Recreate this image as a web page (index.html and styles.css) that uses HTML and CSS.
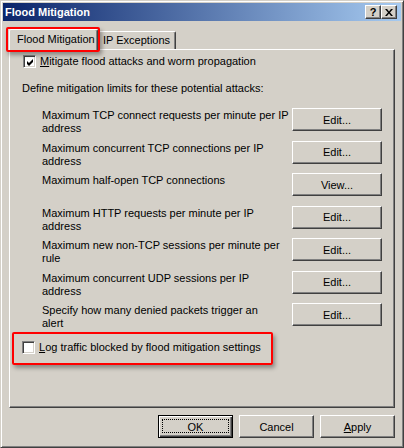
FILE: index.html
```html
<!DOCTYPE html>
<html lang="en">
<head>
    <meta charset="UTF-8">
    <title>Flood Mitigation</title>
    <link rel="stylesheet" href="styles.css">
</head>
<body>
    <div class="window">
        <!-- Заголовок окна -->
        <div class="caption">
            <span class="title">Flood Mitigation</span>
            <div class="cap-buttons">
                <div class="cap-btn help">?</div>
                <div class="cap-btn">
                    <svg width="8" height="7" viewBox="0 0 8 7"><path d="M0 0h2l2 2.5L6 0h2L5 3.5 8 7H6L4 4.5 2 7H0l3-3.5z" fill="#000"/></svg>
                </div>
            </div>
        </div>

        <div class="body">
            <!-- Вкладки -->
            <div class="tabs">
                <div class="tab active">Flood Mitigation</div>
                <div class="tab">IP Exceptions</div>
            </div>

            <div class="panel">
                <label class="check first">
                    <span class="box">
                        <svg width="9" height="9" viewBox="0 0 9 9"><path d="M1 3 3 5 7 1v3L3 8 1 6z" fill="#000"/></svg>
                    </span>
                    <span><u>M</u>itigate flood attacks and worm propagation</span>
                </label>

                <p class="intro">Define mitigation limits for these potential attacks:</p>

                <div class="limits">
                    <div class="limit">
                        <span class="label">Maximum TCP connect requests per minute per IP<br>address</span>
                        <button class="btn">Edit...</button>
                    </div>
                    <div class="limit">
                        <span class="label">Maximum concurrent TCP connections per IP<br>address</span>
                        <button class="btn">Edit...</button>
                    </div>
                    <div class="limit">
                        <span class="label">Maximum half-open TCP connections</span>
                        <button class="btn">View...</button>
                    </div>
                    <div class="limit">
                        <span class="label">Maximum HTTP requests per minute per IP<br>address</span>
                        <button class="btn">Edit...</button>
                    </div>
                    <div class="limit">
                        <span class="label">Maximum new non-TCP sessions per minute per<br>rule</span>
                        <button class="btn">Edit...</button>
                    </div>
                    <div class="limit">
                        <span class="label">Maximum concurrent UDP sessions per IP<br>address</span>
                        <button class="btn">Edit...</button>
                    </div>
                    <div class="limit">
                        <span class="label">Specify how many denied packets trigger an<br>alert</span>
                        <button class="btn">Edit...</button>
                    </div>
                </div>

                <label class="check log">
                    <span class="box"></span>
                    <span><u>L</u>og traffic blocked by flood mitigation settings</span>
                </label>
            </div>

            <!-- Кнопки диалога -->
            <div class="actions">
                <button class="btn wide default">OK</button>
                <button class="btn wide">Cancel</button>
                <button class="btn wide"><u>A</u>pply</button>
            </div>
        </div>

        <!-- Красные пометки поверх окна -->
        <div class="mark mark-tab"></div>
        <div class="mark mark-log"></div>
    </div>
</body>
</html>
```

FILE: styles.css
```css
/* Общие настройки */
body {
    margin: 0;
    font-family: "Liberation Sans", Arial, sans-serif;
    font-size: 11px;
    color: #000;
    background: #d4d0c8;
}

/* Рамка окна */
.window {
    position: relative;
    width: 404px;
    height: 448px;
    box-sizing: border-box;
    padding: 2px;
    background: #d4d0c8;
    border: 1px solid;
    border-color: #d4d0c8 #404040 #404040 #d4d0c8;
    box-shadow: inset 1px 1px #fff, inset -1px -1px #808080;
}

/* Заголовок */
.caption {
    height: 18px;
    display: flex;
    align-items: center;
    justify-content: space-between;
    padding: 0 4px 0 2px;
    background: linear-gradient(to right, #0a246a, #a6caf0);
}

.title {
    color: #fff;
    font-weight: bold;
    font-size: 11px;
    line-height: 13px;
    padding-top: 1px;
}

.cap-buttons {
    display: flex;
    gap: 0;
}

.cap-btn {
    width: 16px;
    height: 14px;
    box-sizing: border-box;
    display: flex;
    align-items: center;
    justify-content: center;
    background: #d4d0c8;
    border: 1px solid;
    border-color: #fff #404040 #404040 #fff;
    box-shadow: inset -1px -1px #808080;
}

.cap-btn.help {
    margin-right: 0;
    font-weight: bold;
    font-size: 11px;
    line-height: 11px;
}

/* Тело диалога */
.body {
    padding: 8px 6px 0 6px;
}

.tabs {
    display: flex;
    align-items: flex-end;
    height: 20px;
    position: relative;
    z-index: 1;
}

.tab {
    height: 18px;
    box-sizing: border-box;
    padding: 2px 5px 0 5px;
    background: #d4d0c8;
    border-left: 1px solid #fff;
    border-top: 1px solid #fff;
    border-right: 1px solid #404040;
    box-shadow: inset -1px 0 #808080;
    border-radius: 2px 2px 0 0;
    line-height: 13px;
}

.tab.active {
    height: 21px;
    width: 89px;
    margin-bottom: -1px;
    padding: 3px 0 0 7px;
}

.tab + .tab {
    border-left: none;
    margin-bottom: 0;
}

/* Панель вкладки */
.panel {
    height: 359px;
    box-sizing: border-box;
    padding: 0 12px 0 12px;
    border: 1px solid;
    border-color: #fff #404040 #404040 #fff;
    box-shadow: inset -1px -1px #808080;
}

.check {
    display: flex;
    align-items: center;
    gap: 4px;
    line-height: 13px;
}

.check.first {
    margin: 5px 0 0 1px;
}

.check.log {
    margin-top: 15px;
}

.box {
    width: 13px;
    height: 13px;
    box-sizing: border-box;
    display: flex;
    align-items: center;
    justify-content: center;
    background: #fff;
    border: 1px solid;
    border-color: #808080 #fff #fff #808080;
    box-shadow: inset 1px 1px #404040, inset -1px -1px #d4d0c8;
    flex-shrink: 0;
}

.box svg {
    margin: 1px 0 0 1px;
}

.intro {
    margin: 14px 0 0 0;
    line-height: 13px;
}

/* Список ограничений */
.limits {
    display: flex;
    flex-direction: column;
    gap: 9.5px;
    margin-top: 13px;
    padding-left: 20px;
}

.limit {
    display: flex;
    align-items: flex-start;
    justify-content: space-between;
    height: 23px;
}

.label {
    line-height: 13px;
    padding-top: 1px;
    white-space: nowrap;
}

/* Кнопки */
.btn {
    width: 90px;
    height: 23px;
    box-sizing: border-box;
    padding: 0;
    font-family: inherit;
    font-size: 11px;
    color: #000;
    background: #d4d0c8;
    border: 1px solid;
    border-color: #fff #404040 #404040 #fff;
    box-shadow: inset -1px -1px #808080;
    border-radius: 0;
    position: relative;
}

.actions {
    display: flex;
    justify-content: flex-end;
    gap: 6px;
    margin-top: 7px;
}

.btn.wide {
    width: 75px;
}

.btn.default {
    border-color: #000;
    box-shadow: inset 1px 1px #fff, inset -1px -1px #404040, inset -2px -2px #808080;
}

.btn.default::after {
    content: "";
    position: absolute;
    left: 3px;
    top: 3px;
    right: 3px;
    bottom: 4px;
    border: 1px dotted #000;
}

/* Красные пометки */
.mark {
    position: absolute;
    box-sizing: border-box;
    border: 2px solid #ff0000;
    border-radius: 2px;
    box-shadow: 2px 3px 4px rgba(0, 0, 0, 0.35);
    z-index: 2;
}

.mark-tab {
    left: 5px;
    top: 26px;
    width: 94px;
    height: 25px;
}

.mark-log {
    left: 11px;
    top: 331px;
    width: 261px;
    height: 33px;
}
```
